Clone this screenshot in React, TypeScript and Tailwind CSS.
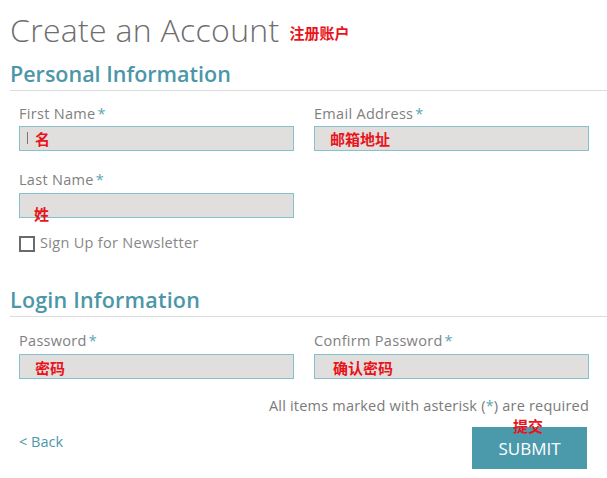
import { useState } from 'react';

const cn = "'Noto Sans CJK SC', sans-serif";

function Label({ text }: { text: string }) {
  return (
    <div className="text-[14.5px] font-medium leading-none text-[#808080] tracking-[0.3px]">
      {text}
      <span className="text-[#5aa6b6] ml-[2px]">*</span>
    </div>
  );
}

function Field({ label, note, noteClass, cursor }: { label: string; note: string; noteClass: string; cursor?: boolean }) {
  return (
    <div>
      <Label text={label} />
      <div className="relative mt-[5px] h-[25px] bg-[#e1dfdd] border border-[#85c0cc]">
        {cursor && <span className="absolute left-[7px] top-[5px] w-px h-[12px] bg-[#777]" />}
        <span
          className={`absolute text-[15px] font-bold text-[#e8141c] leading-none whitespace-nowrap ${noteClass}`}
          style={{ fontFamily: cn }}
        >
          {note}
        </span>
      </div>
    </div>
  );
}

export default function App() {
  const [checked, setChecked] = useState(false);

  return (
    <div className="w-[607px] h-[478px] bg-white overflow-hidden" style={{ fontFamily: "'Open Sans', sans-serif" }}>
      {/* Header */}
      <div className="pl-[10px] pt-[14px] flex items-end">
        <h1 className="text-[32px] font-light leading-none text-[#6e6e6e] tracking-[0.3px]">Create an Account</h1>
        <span className="ml-[10px] mb-[6px] text-[15px] font-bold text-[#e8141c] leading-none" style={{ fontFamily: cn }}>
          注册账户
        </span>
      </div>

      {/* Personal Information */}
      <div className="ml-[10px] mt-[17px] pb-[5px] border-b border-[#dcdcdc]">
        <h2 className="text-[21.5px] font-semibold leading-none text-[#4b97a8]">Personal Information</h2>
      </div>
      <div className="pl-[19px] pt-[16px] grid grid-cols-[275px_275px] gap-x-[20px]">
        <Field label="First Name" note="名" noteClass="left-[15px] top-[4px]" cursor />
        <Field label="Email Address" note="邮箱地址" noteClass="left-[15px] top-[4px]" />
        <div className="mt-[22px]">
          <Field label="Last Name" note="姓" noteClass="left-[14px] top-[12px]" />
        </div>
        <div />
      </div>
      <label className="flex items-center ml-[19px] mt-[18px] cursor-pointer">
        <input type="checkbox" checked={checked} onChange={() => setChecked(!checked)} className="sr-only" />
        <span className="w-[16px] h-[16px] border-2 border-[#6a6a6a] bg-white" />
        <span className="ml-[5px] text-[14.5px] font-medium leading-none text-[#878787] tracking-[0.3px]">Sign Up for Newsletter</span>
      </label>

      {/* Login Information */}
      <div className="ml-[10px] mt-[37px] pb-[6px] border-b border-[#dcdcdc]">
        <h2 className="text-[21.5px] font-semibold leading-none text-[#4b97a8] tracking-[0.2px]">Login Information</h2>
      </div>
      <div className="pl-[19px] pt-[17px] grid grid-cols-[275px_275px] gap-x-[20px]">
        <Field label="Password" note="密码" noteClass="left-[15px] top-[5px]" />
        <Field label="Confirm Password" note="确认密码" noteClass="left-[18px] top-[5px]" />
      </div>

      <div className="pr-[18px] mt-[20px] text-right text-[14.5px] leading-none text-[#7a7a7a] tracking-[0.2px]">
        All items marked with asterisk (<span className="text-[#5aa6b6]">*</span>) are required
      </div>

      <div className="flex items-end justify-between pl-[19px] pr-[20px] mt-[14px]">
        <a href="#" className="text-[14.5px] font-medium text-[#4b97a8] leading-none mb-[20px]">&lt; Back</a>
        <div className="relative">
          <span className="absolute left-[41px] -top-[9px] text-[15px] font-bold text-[#e8141c] leading-none" style={{ fontFamily: cn }}>
            提交
          </span>
          <button className="w-[115px] h-[42px] bg-[#4a9aac] text-white text-[17px] leading-none">SUBMIT</button>
        </div>
      </div>
    </div>
  );
}
